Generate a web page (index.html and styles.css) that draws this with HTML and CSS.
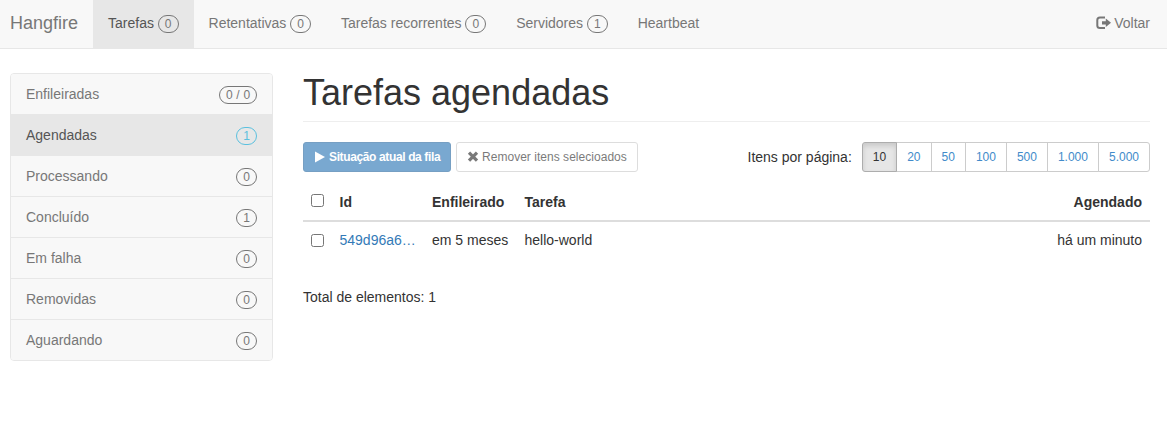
FILE: index.html
```html
<!DOCTYPE html>
<html lang="pt">
<head>
<meta charset="utf-8">
<title>Tarefas agendadas</title>
<link rel="stylesheet" href="styles.css">
</head>
<body>
<nav class="navbar">
  <a class="brand">Hangfire</a>
  <a class="nav-link active">Tarefas <span class="badge">0</span></a>
  <a class="nav-link">Retentativas <span class="badge">0</span></a>
  <a class="nav-link">Tarefas recorrentes <span class="badge">0</span></a>
  <a class="nav-link">Servidores <span class="badge">1</span></a>
  <a class="nav-link">Heartbeat</a>
  <a class="nav-link back"><svg class="icon-out" viewBox="0 0 15 14"><path d="M9 1.5H4Q1.3 1.5 1.3 4V9.5Q1.3 12 4 12H9" fill="none" stroke="currentColor" stroke-width="2"/><path d="M6 5.2H9.8V2.6L15 6.8L9.8 11V8.4H6Z" fill="currentColor"/></svg><span>Voltar</span></a>
</nav>
<div class="layout">
  <aside class="stats">
    <a class="stat">Enfileiradas <span class="badge wide">0 / 0</span></a>
    <a class="stat active">Agendadas <span class="badge info">1</span></a>
    <a class="stat">Processando <span class="badge">0</span></a>
    <a class="stat">Concluído <span class="badge">1</span></a>
    <a class="stat">Em falha <span class="badge">0</span></a>
    <a class="stat">Removidas <span class="badge">0</span></a>
    <a class="stat">Aguardando <span class="badge">0</span></a>
  </aside>
  <main class="content">
    <h1>Tarefas agendadas</h1>
    <div class="toolbar">
      <button class="btn primary" disabled><svg class="icon" viewBox="0 0 12 12"><path d="M1 .6L11 6L1 11.4Z" fill="currentColor"/></svg><span>Situação atual da fila</span></button>
      <button class="btn muted" disabled><svg class="icon" viewBox="0 0 12 12"><path d="M2 1.7L10 9.7M10 1.7L2 9.7" stroke="currentColor" stroke-width="3.2"/></svg><span>Remover itens selecioados</span></button>
      <span class="per-page">Itens por página:</span>
      <div class="group">
        <a class="btn current">10</a><a class="btn">20</a><a class="btn">50</a><a class="btn">100</a><a class="btn">500</a><a class="btn">1.000</a><a class="btn">5.000</a>
      </div>
    </div>
    <table class="jobs">
      <thead><tr><th class="col-check"><input type="checkbox"></th><th class="col-id">Id</th><th class="col-queue">Enfileirado</th><th>Tarefa</th><th class="right">Agendado</th></tr></thead>
      <tbody><tr><td><input type="checkbox"></td><td><a class="job-id">549d96a6…</a></td><td>em 5 meses</td><td>hello-world</td><td class="right">há um minuto</td></tr></tbody>
    </table>
    <div class="total">Total de elementos: 1</div>
  </main>
</div>
</body>
</html>
```
FILE: styles.css
```css
* { box-sizing: border-box; }
body {
  margin: 0;
  background: #fff;
  color: #333;
  font: 14px/20px "Liberation Sans", Arial, sans-serif;
}
.navbar {
  display: flex;
  height: 49px;
  background: #f8f8f8;
  border-bottom: 1px solid #e7e7e7;
  color: #777;
}
.brand { padding: 13px 15px 0 10px; font-size: 18px; }
.nav-link { padding: 13px 15px 0; white-space: nowrap; }
.nav-link.active { background: #e7e7e7; color: #555; }
.back { display: flex; margin-left: auto; padding-right: 17px; gap: 3px; }
.icon-out { width: 15px; height: 14px; margin-top: 3px; }
.badge {
  display: inline-block;
  min-width: 10px;
  padding: 2px 6px;
  border: 1px solid #777;
  border-radius: 10px;
  color: #777;
  font-size: 12px;
  line-height: 12px;
  text-align: center;
  vertical-align: middle;
}
.badge.info { border-color: #5bc0de; color: #5bc0de; }
.badge.wide { width: 38px; padding: 2px 0; word-spacing: .4px; }
.nav-link .badge { height: 18px; }
.layout { display: flex; gap: 30px; padding: 24px 17px 0 10px; }
.stats {
  flex: none;
  align-self: flex-start;
  width: 263px;
  overflow: hidden;
  border: 1px solid #e7e7e7;
  border-radius: 4px;
}
.stat {
  display: flex;
  justify-content: space-between;
  height: 41px;
  padding: 10px 15px;
  border-bottom: 1px solid #e7e7e7;
  background: #f8f8f8;
  color: #777;
}
.stat:last-child { height: 40px; border-bottom: 0; }
.stat.active { background: #e7e7e7; color: #555; }
.stat .badge { height: 18px; margin-top: 2px; }
.content { flex: 1; min-width: 0; }
h1 {
  height: 49px;
  margin: 0 0 20px;
  border-bottom: 1px solid #eee;
  font-size: 36px;
  font-weight: normal;
  line-height: 39px;
}
.toolbar { display: flex; height: 30px; margin-bottom: 12px; }
.btn {
  display: inline-flex;
  align-items: center;
  height: 30px;
  padding: 0 10px;
  border: 1px solid #ccc;
  border-radius: 3px;
  background: #fff;
  color: #428bca;
  font: 12px/18px "Liberation Sans", Arial, sans-serif;
}
.primary, .muted { gap: 3px; opacity: .65; white-space: nowrap; }
.primary { width: 148px; border-color: #2e6da4; background: #337ab7; color: #fff; font-weight: bold; letter-spacing: -.37px; justify-content: flex-start; }
.muted { width: 182px; margin-left: 5px; color: #333; justify-content: flex-start; letter-spacing: .03px; }
.icon { flex: none; width: 12px; height: 12px; }
.per-page { margin-left: auto; padding-top: 5px; }
.group { display: flex; margin-left: 10px; }
.group .btn { margin-left: -1px; border-radius: 0; }
.group .btn:first-child { margin-left: 0; border-radius: 3px 0 0 3px; }
.group .btn:last-child { border-radius: 0 3px 3px 0; }
.group .current {
  z-index: 1;
  border-color: #adadad;
  background: #e6e6e6;
  box-shadow: inset 0 3px 5px rgba(0, 0, 0, .125);
  color: #333;
}
.jobs { width: 100%; table-layout: fixed; border-spacing: 0; }
.jobs th { height: 38px; padding: 8px; border-bottom: 2px solid #ddd; text-align: left; }
.jobs td { height: 36px; padding: 8px; }
.jobs .right { text-align: right; }
.jobs input { display: block; width: 13px; height: 13px; margin: 0; }
.jobs th input { margin-bottom: 3px; }
.col-check { width: 28.5px; }
.col-id, .col-queue { width: 92.5px; }
.job-id { color: #337ab7; }
.total { margin-top: 29px; }
```
